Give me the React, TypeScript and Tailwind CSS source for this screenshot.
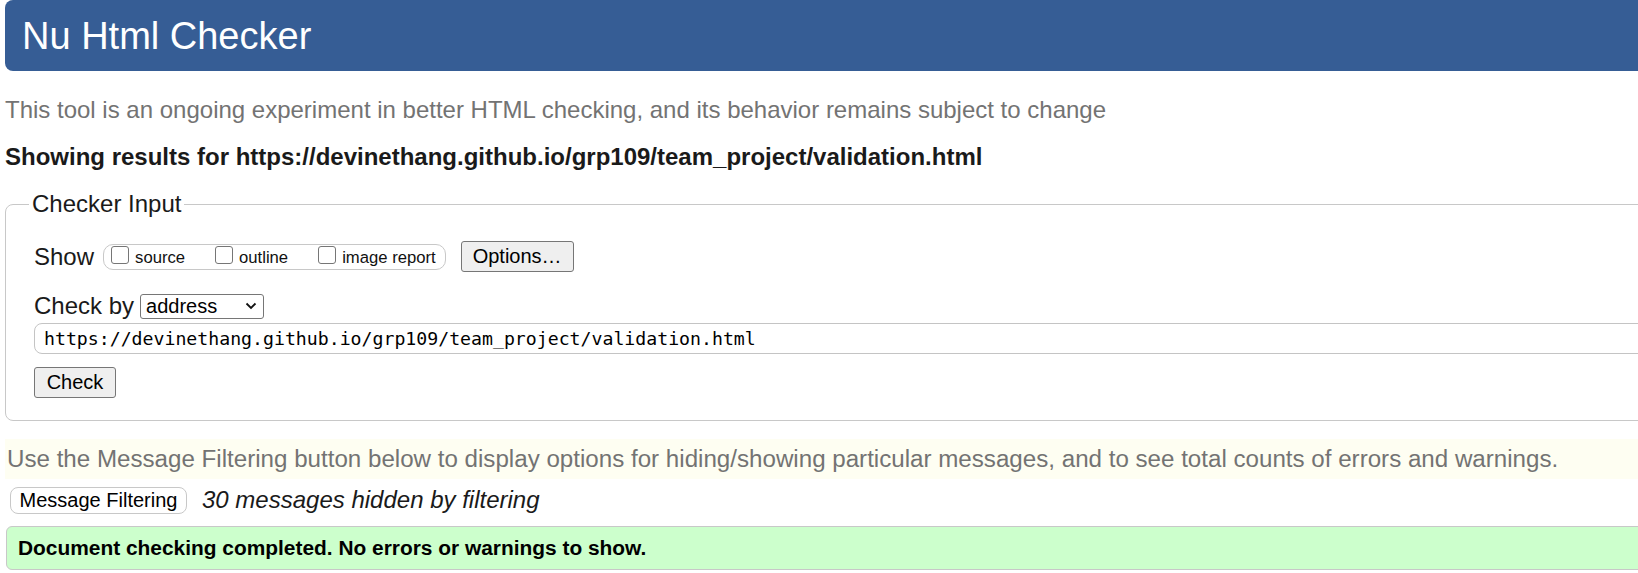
const url = 'https://devinethang.github.io/grp109/team_project/validation.html'

const Checkbox = ({ label }: { label: string }) => (
    <label className="flex items-start">
        <span className="mt-px h-[18px] w-[18px] rounded-[3px] border-[1.5px] border-[#767676] bg-white" />
        <span className="ml-[6px] mt-[3px] text-[16.67px] leading-[19px] text-[#111]">
            {label}
        </span>
    </label>
)

const FormButton = ({ text, className }: { text: string; className?: string }) => (
    <button
        className={`h-[31px] rounded-[3px] border border-[#767676] bg-[#efefef] text-[20px] leading-[23px] text-black ${className ?? ''}`}
    >
        {text}
    </button>
)

export default function App() {
    return (
        <div className="h-[573px] w-[1638px] overflow-hidden bg-white font-['Liberation_Sans',Arial,sans-serif] text-[#222]">
            <div className="w-[1800px] pl-[5px]">
                <h1 className="h-[71px] rounded-[8px] bg-[#365d95] pl-[17px] pt-[14px] text-[38px] leading-[44px] text-white">
                    Nu Html Checker
                </h1>

                <p className="mt-[25px] text-[24px] leading-[28px] text-[#737373]">
                    This tool is an ongoing experiment in better HTML checking, and its
                    behavior remains subject to change
                </p>
                <p className="mt-[19px] text-[24px] font-bold leading-[28px] text-[#1a1a1a]">
                    Showing results for {url}
                </p>

                <fieldset className="mt-[19px] rounded-[8px] border border-[#c8c8c8] pb-[22px] pl-[28px]">
                    <legend className="-ml-[5px] px-[3px] text-[24px] leading-[28px] text-[#1a1a1a]">
                        Checker Input
                    </legend>

                    <div className="mt-[23px] flex items-center">
                        <span className="text-[24px] leading-[28px] text-[#1a1a1a]">Show</span>
                        <div className="ml-[9px] flex h-[26px] items-start gap-[30px] rounded-[10px] border border-[#c8c8c8] pl-[7px] pr-[9px]">
                            <Checkbox label="source" />
                            <Checkbox label="outline" />
                            <Checkbox label="image report" />
                        </div>
                        <FormButton text="Options…" className="ml-[15px] w-[113px]" />
                    </div>

                    <div className="mt-[20px] flex items-center">
                        <span className="text-[24px] leading-[28px] text-[#1a1a1a]">Check by</span>
                        <div className="ml-[6px] flex h-[25px] w-[124px] items-center justify-between rounded-[3px] border border-[#767676] bg-white pl-[5px] pr-[6px]">
                            <span className="text-[20px] leading-[23px] text-black">address</span>
                            <svg width="12" height="8" viewBox="0 0 12 8" fill="none">
                                <path d="M1.5 1.5 6 6l4.5-4.5" stroke="#111" strokeWidth="1.8" />
                            </svg>
                        </div>
                    </div>

                    <div className="mt-[3px] flex h-[31px] items-center rounded-[8px] border border-[#c4c4c4] pl-[9px] font-['DejaVu_Sans_Mono',monospace] text-[18.2px] text-black">
                        {url}
                    </div>

                    <FormButton text="Check" className="mt-[13px] w-[82px]" />
                </fieldset>

                <p className="mt-[18px] flex h-[40px] items-center bg-[#fefef2] pl-[2px] text-[24.15px] text-[#737373]">
                    Use the Message Filtering button below to display options for
                    hiding/showing particular messages, and to see total counts of errors
                    and warnings.
                </p>

                <div className="mt-[7px] flex items-center">
                    <button className="ml-[5px] h-[27px] w-[177px] rounded-[8px] border border-[#c8c8c8] bg-white text-[20px] leading-[23px] text-black">
                        Message Filtering
                    </button>
                    <span className="ml-[15px] text-[24px] italic leading-[28px] text-[#1a1a1a]">
                        30 messages hidden by filtering
                    </span>
                </div>

                <div className="ml-px mt-[12px] flex h-[44px] items-center rounded-[6px] border border-[#c8c8c8] bg-[#ccffcc] pl-[11px] text-[20.9px] font-bold text-black">
                    Document checking completed. No errors or warnings to show.
                </div>
            </div>
        </div>
    )
}
